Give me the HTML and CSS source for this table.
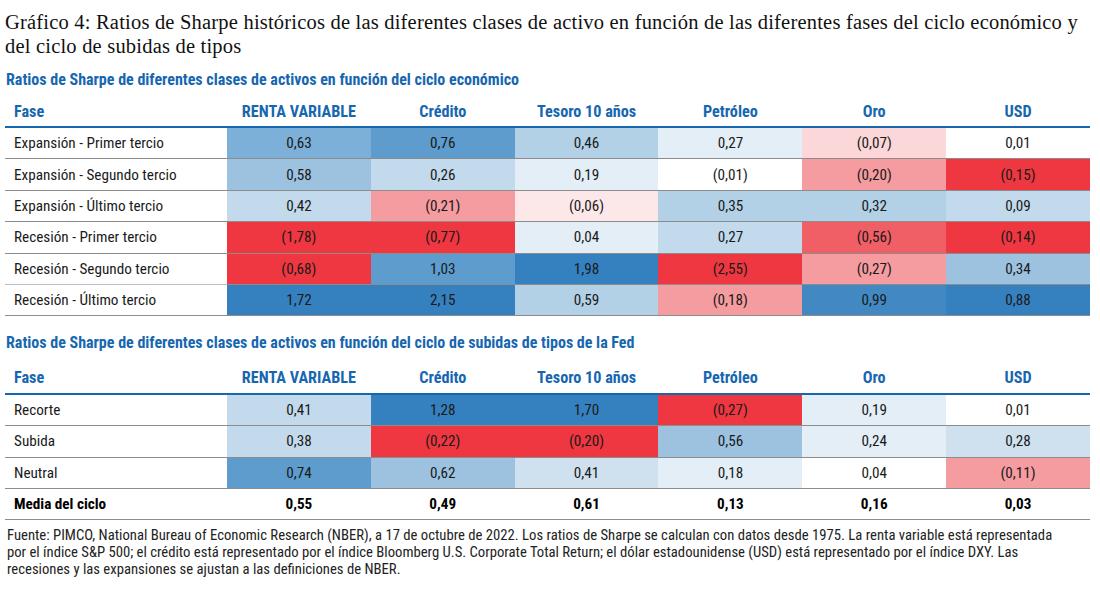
FILE: index.html
```html
<!DOCTYPE html>
<html lang="es">
<head>
<meta charset="utf-8">
<title>Gráfico 4</title>
<link rel="stylesheet" href="styles.css">
</head>
<body>
<div class="page">
  <h1 class="title">Gráfico 4: Ratios de Sharpe históricos de las diferentes clases de activo en función de las diferentes fases del ciclo económico y del ciclo de subidas de tipos</h1>

  <h2 class="subtitle sub1">Ratios de Sharpe de diferentes clases de activos en función del ciclo económico</h2>
  <table class="grid">
    <colgroup><col class="c-fase"><col><col><col><col><col><col></colgroup>
    <thead>
      <tr><th class="fase">Fase</th><th>RENTA VARIABLE</th><th>Crédito</th><th>Tesoro 10 años</th><th>Petróleo</th><th>Oro</th><th>USD</th></tr>
    </thead>
    <tbody>
      <tr><td class="fase">Expansión - Primer tercio</td><td class="b4">0,63</td><td class="b3">0,76</td><td class="b6">0,46</td><td class="b8">0,27</td><td class="r1">(0,07)</td><td>0,01</td></tr>
      <tr><td class="fase">Expansión - Segundo tercio</td><td class="b5">0,58</td><td class="b7">0,26</td><td class="b8">0,19</td><td>(0,01)</td><td class="r3">(0,20)</td><td class="r5">(0,15)</td></tr>
      <tr><td class="fase">Expansión - Último tercio</td><td class="b7">0,42</td><td class="r3">(0,21)</td><td class="r0">(0,06)</td><td class="b6">0,35</td><td class="b6">0,32</td><td class="b7">0,09</td></tr>
      <tr><td class="fase">Recesión - Primer tercio</td><td class="r5">(1,78)</td><td class="r5">(0,77)</td><td class="b8">0,04</td><td class="b7">0,27</td><td class="r4">(0,56)</td><td class="r5">(0,14)</td></tr>
      <tr class="pre-last"><td class="fase">Recesión - Segundo tercio</td><td class="r5">(0,68)</td><td class="b3">1,03</td><td class="b1">1,98</td><td class="r5">(2,55)</td><td class="r3">(0,27)</td><td class="b5">0,34</td></tr>
      <tr><td class="fase">Recesión - Último tercio</td><td class="b1">1,72</td><td class="b1">2,15</td><td class="b6">0,59</td><td class="r3">(0,18)</td><td class="b2">0,99</td><td class="b1">0,88</td></tr>
    </tbody>
  </table>

  <h2 class="subtitle sub2">Ratios de Sharpe de diferentes clases de activos en función del ciclo de subidas de tipos de la Fed</h2>
  <table class="grid grid2">
    <colgroup><col class="c-fase"><col><col><col><col><col><col></colgroup>
    <thead>
      <tr><th class="fase">Fase</th><th>RENTA VARIABLE</th><th>Crédito</th><th>Tesoro 10 años</th><th>Petróleo</th><th>Oro</th><th>USD</th></tr>
    </thead>
    <tbody>
      <tr><td class="fase">Recorte</td><td class="b7">0,41</td><td class="b1">1,28</td><td class="b1">1,70</td><td class="r5">(0,27)</td><td class="b8">0,19</td><td>0,01</td></tr>
      <tr><td class="fase">Subida</td><td class="b7">0,38</td><td class="r5">(0,22)</td><td class="r5">(0,20)</td><td class="b5">0,56</td><td class="b8">0,24</td><td class="b7l">0,28</td></tr>
      <tr><td class="fase">Neutral</td><td class="b3">0,74</td><td class="b5">0,62</td><td class="b7l">0,41</td><td class="b8">0,18</td><td>0,04</td><td class="r3">(0,11)</td></tr>
      <tr class="total"><td class="fase">Media del ciclo</td><td>0,55</td><td>0,49</td><td>0,61</td><td>0,13</td><td>0,16</td><td>0,03</td></tr>
    </tbody>
  </table>

  <p class="note">Fuente: PIMCO, National Bureau of Economic Research (NBER), a 17 de octubre de 2022. Los ratios de Sharpe se calculan con datos desde 1975. La renta variable está representada por el índice S&amp;P 500; el crédito está representado por el índice Bloomberg U.S. Corporate Total Return; el dólar estadounidense (USD) está representado por el índice DXY. Las recesiones y las expansiones se ajustan a las definiciones de NBER.</p>
</div>
</body>
</html>
```
FILE: styles.css
```css
html, body {
  margin: 0;
  padding: 0;
  background: #ffffff;
}
.page {
  width: 1090px;
  padding: 10px 0 0 5px;
  font-family: "Roboto Condensed", Roboto, sans-serif;
  color: #1a1a1a;
}
.title {
  margin: 0;
  font-family: "Liberation Serif", serif;
  font-weight: normal;
  font-size: 20.5px;
  line-height: 24px;
  letter-spacing: 0.2px;
  color: #111;
  width: 1085px;
}
.subtitle {
  margin: 0;
  padding-left: 1px;
  font-size: 16px;
  font-weight: bold;
  color: #1767b0;
  line-height: 20px;
}
.sub1 { margin-top: 11.5px; }
.sub2 { margin-top: 16.6px; }
.grid {
  width: 1085px;
  border-collapse: separate;
  border-spacing: 0;
  table-layout: fixed;
}
.c-fase { width: 222px; }
.grid th {
  padding: 12.5px 0 4px;
  line-height: 20px;
  font-size: 16.2px;
  font-weight: bold;
  color: #1767b0;
  text-align: center;
  border-bottom: 2px solid #1767b0;
  vertical-align: bottom;
}
.grid2 th { padding-top: 15.5px; padding-bottom: 4.5px; }
.grid th.fase, .grid td.fase {
  text-align: left;
  padding-left: 9px;
}
.grid td {
  padding: 5.2px 0;
  line-height: 20px;
  font-size: 15.2px;
  text-align: center;
  border-bottom: 1px solid #8c8c8c;
  vertical-align: middle;
  color: #1a1a1a;
}
.grid tr.pre-last td.fase { border-bottom-color: #bdbdbd; }
.grid tr.total td { font-weight: bold; color: #000; }

.b1 { background: #3581c0; }
.b2 { background: #4289c4; }
.b3 { background: #5d9ccd; }
.b4 { background: #7db0d8; }
.b5 { background: #9cc2e0; }
.b6 { background: #b3d1e6; }
.b7 { background: #c3daec; }
.b7l { background: #cfe1ef; }
.b8 { background: #e3eef6; }
.r0 { background: #fde8e9; }
.r1 { background: #fbd7d9; }
.r3 { background: #f59ca0; }
.r4 { background: #f05f66; }
.r5 { background: #ee3740; }

.note {
  margin: 7px 0 0 2px;
  font-size: 14.7px;
  line-height: 17px;
  color: #222;
  width: 1060px;
}
```
